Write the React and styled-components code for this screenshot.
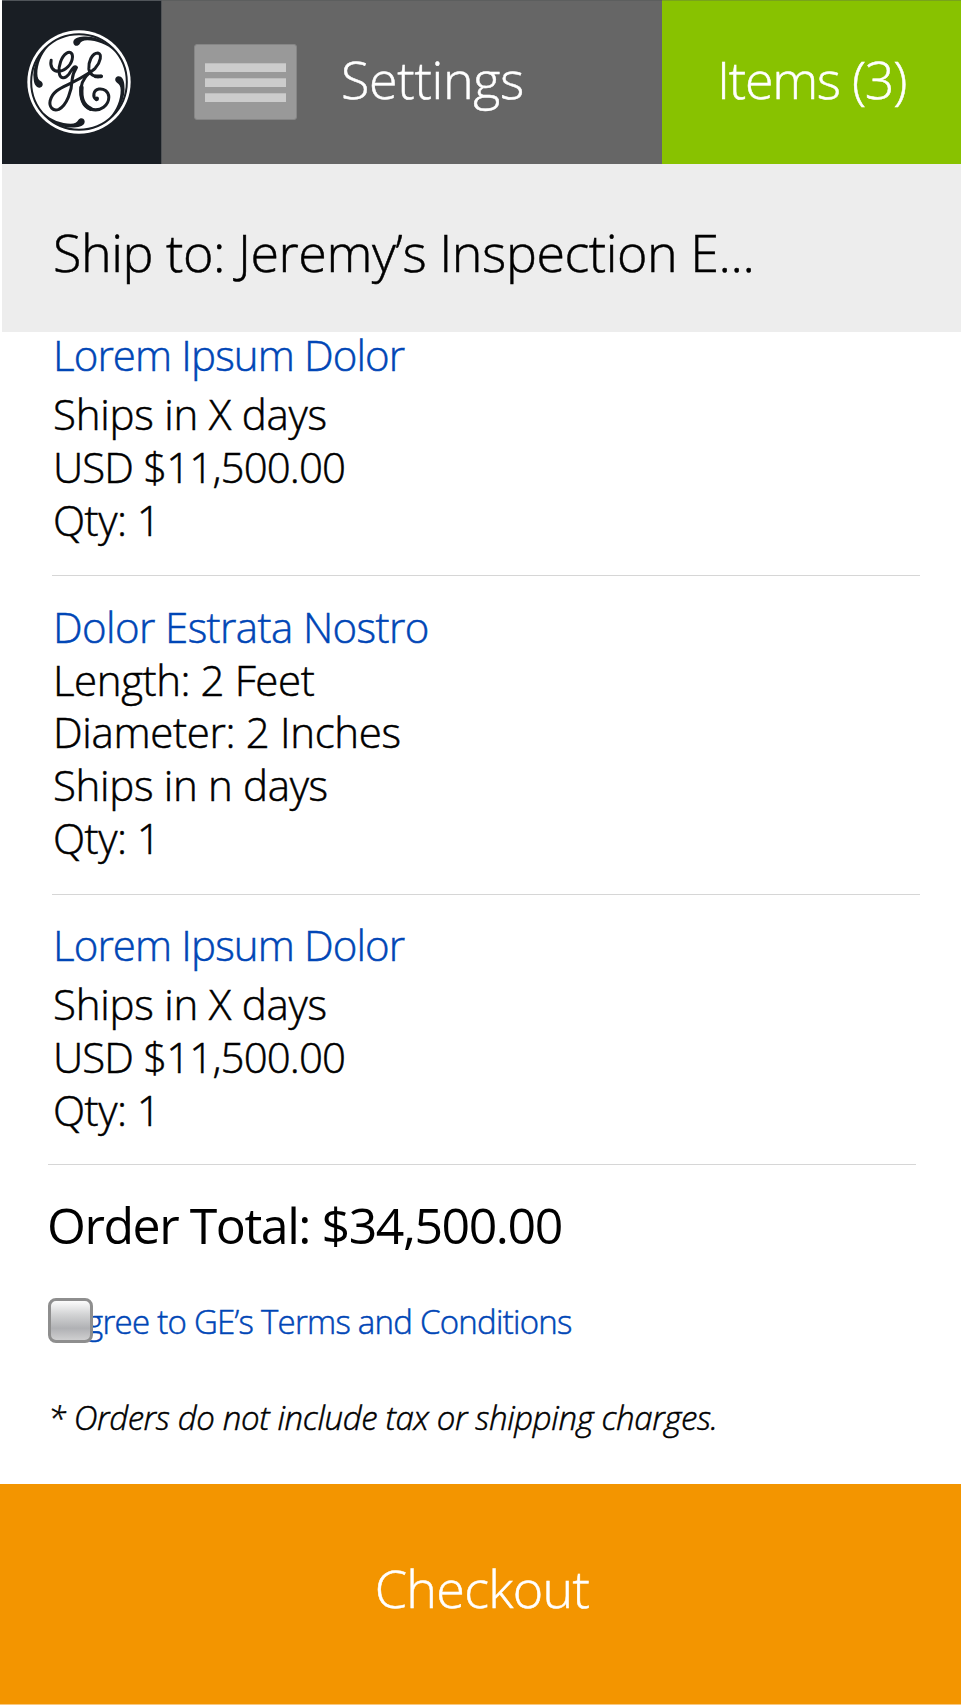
import React from 'react';
import styled, { createGlobalStyle } from 'styled-components';

const GlobalStyle = createGlobalStyle`
  *, *::before, *::after { box-sizing: border-box; }
  body { margin: 0; background: #fff; }
`;

const Page = styled.div`
  display: flex;
  flex-direction: column;
  height: 1705px;
  overflow: hidden;
  background: #fff;
  color: #000;
  font-family: "Open Sans", "Noto Sans", sans-serif;
  font-weight: 300;
  -webkit-text-stroke: 0.5px currentColor;
`;

const Header = styled.header`
  display: flex;
  flex: none;
  height: 164px;
  margin-left: 2px;
`;

const LogoCell = styled.div`
  display: flex;
  align-items: center;
  justify-content: center;
  width: 159px;
  padding: 0 6px 1px 0;
  border-top: 1px solid #50555a;
  background: #191e24;
`;

const Logo = styled.svg`
  width: 104px;
  height: 104px;
`;

const SettingsCell = styled.div`
  display: flex;
  align-items: center;
  width: 501px;
  padding: 0 0 1px 32px;
  border-top: 1px solid #5c5e5e;
  border-left: 1px solid #505356;
  background: #666;
`;

const MenuButton = styled.button`
  display: flex;
  flex-direction: column;
  align-items: center;
  justify-content: center;
  gap: 6px;
  width: 103px;
  height: 76px;
  padding: 0;
  border: 1px solid #868686;
  border-radius: 3px;
  background: #999;
`;

const MenuBar = styled.span`
  width: 81px;
  height: 9px;
  background: #ccc;
  border-top: 1px solid #bdbdbd;
`;

const HeaderLabel = styled.span`
  padding-bottom: 7px;
  color: #fff;
  font-size: 52px;
  line-height: 71px;
  white-space: nowrap;
  letter-spacing: ${(p) => p.$spacing}px;
  margin-left: ${(p) => p.$left}px;
`;

const ItemsCell = styled.div`
  display: flex;
  align-items: center;
  flex: 1;
  padding-bottom: 1px;
  border-top: 1px solid #78a31c;
  background: #88c200;
`;

const ShipTo = styled.div`
  flex: none;
  height: 168px;
  margin-left: 2px;
  padding: 52px 0 0 51px;
  background: #ededed;
  font-size: 52px;
  line-height: 71px;
  letter-spacing: -0.45px;
  white-space: nowrap;
`;

const Item = styled.section`
  flex: none;
  margin: 0 ${(p) => p.$right}px 0 ${(p) => p.$left}px;
  padding: ${(p) => p.$top}px 0 ${(p) => p.$bottom}px ${(p) => 53 - p.$left}px;
  border-bottom: 1px solid #d6d6d6;
`;

const ItemTitle = styled.a`
  display: block;
  margin-bottom: ${(p) => p.$gap}px;
  color: #0046b6;
  font-size: 42px;
  line-height: 45px;
  letter-spacing: ${(p) => p.$spacing}px;
`;

const ItemLine = styled.div`
  font-size: 42px;
  line-height: 53px;
  letter-spacing: ${(p) => p.$spacing}px;
  margin-top: ${(p) => p.$lead || 0}px;
`;

const Total = styled.div`
  flex: none;
  margin: 30px 0 0 47px;
  font-size: 50px;
  font-weight: 400;
  line-height: 60px;
  letter-spacing: -1.45px;
  -webkit-text-stroke: 0;
`;

const Terms = styled.label`
  position: relative;
  display: flex;
  align-items: center;
  flex: none;
  height: 45px;
  margin-top: 43px;
  padding: 2px 0 0 54px;
  color: #0046b6;
  font-size: 33px;
  letter-spacing: -0.75px;
`;

const Checkbox = styled.span`
  position: absolute;
  left: 48px;
  top: 0;
  width: 45px;
  height: 45px;
  border: 3px solid #8e8e8e;
  border-radius: 8px;
  background: linear-gradient(#fcfcfc 0%, #d2d3d4 35%, #b0b1b4 70%, #cfcfd0 100%);
`;

const Note = styled.p`
  flex: none;
  margin: 52px 0 0 48px;
  font-size: 33px;
  font-style: italic;
  line-height: 45px;
  letter-spacing: -0.36px;
  word-spacing: 0;
  white-space: nowrap;
`;

const Checkout = styled.button`
  flex: none;
  height: 221px;
  margin: 44px 0 0;
  padding: 0 0 14px 3px;
  border: 0;
  border-bottom: 1px solid #f9c880;
  background: #f39500;
  color: #fff;
  font: inherit;
  font-size: 52px;
  letter-spacing: -0.66px;
`;

const product = {
  title: 'Lorem Ipsum Dolor',
  spacing: -0.88,
  gap: 10,
  lines: [
    { text: 'Ships in X days', spacing: -0.24 },
    { text: 'USD $11,500.00', spacing: -0.88 },
    { text: 'Qty: 1', spacing: -0.5 },
  ],
};

const items = [
  { ...product, top: 0, bottom: 29, left: 52, right: 41 },
  {
    title: 'Dolor Estrata Nostro',
    spacing: -0.6,
    gap: 4,
    top: 28,
    bottom: 30,
    left: 52,
    right: 41,
    lines: [
      { text: 'Length: 2 Feet', spacing: -0.42 },
      { text: 'Diameter: 2 Inches', spacing: -0.32, lead: -1 },
      { text: 'Ships in n days', spacing: -0.32 },
      { text: 'Qty: 1', spacing: -0.5 },
    ],
  },
  { ...product, top: 27, bottom: 28, left: 48, right: 45 },
];

const SWIRL =
  'M-17 -118 C-18 -127 -8 -135 8 -136 C45 -141 85 -123 106 -92 C85 -113 52 -125 25 -125 C12 -125 6 -121 2 -114 C-3 -106 -16 -107 -17 -118 Z';

function Monogram() {
  return (
    <Logo viewBox="-156 -156 312 312">
      <circle r="155" fill="#fff" />
      <circle r="143.5" fill="none" stroke="#191e24" strokeWidth="6" />
      {[0, 90, 180, 270].map((a) => (
        <path key={a} d={SWIRL} fill="#191e24" transform={`rotate(${a})`} />
      ))}
      <g
        transform="translate(-236.5 -246)"
        fill="none"
        stroke="#191e24"
        strokeWidth="9"
        strokeLinecap="round"
        strokeLinejoin="round"
      >
        <path d="M153 181 C149 199 157 214 176 214 C197 212 216 192 217 171 C217 157 208 154 199 160 C184 170 174 198 177 218 C180 237 195 237 205 224 C214 211 221 196 229 202 C224 210 217 222 216 239 C215 272 200 316 176 328 C158 335 146 320 150 302 C157 273 184 263 211 250 C235 239 256 226 270 217" />
        <path d="M303 229 C282 233 269 224 266 207 C264 187 275 159 293 159 C307 161 301 187 285 205 C267 221 247 232 243 262 C240 293 249 319 271 327 C302 337 326 315 326 291 C325 273 310 265 296 267 C279 270 276 291 289 299" />
        <path d="M244 262 C241 293 250 318 271 326" strokeWidth="13" />
        <path d="M286 229 L303 229" strokeWidth="11" />
        <circle cx="290" cy="296" r="4" fill="#191e24" strokeWidth="5" />
      </g>
    </Logo>
  );
}

export default function App() {
  return (
    <Page>
      <GlobalStyle />
      <Header>
        <LogoCell>
          <Monogram />
        </LogoCell>
        <SettingsCell>
          <MenuButton aria-label="Menu">
            <MenuBar />
            <MenuBar />
            <MenuBar />
          </MenuButton>
          <HeaderLabel $left={44} $spacing={-0.3}>Settings</HeaderLabel>
        </SettingsCell>
        <ItemsCell>
          <HeaderLabel $left={55} $spacing={-1.3}>Items (3)</HeaderLabel>
        </ItemsCell>
      </Header>
      <ShipTo>Ship to: Jeremy’s Inspection E...</ShipTo>
      {items.map((item, i) => (
        <Item key={i} $top={item.top} $bottom={item.bottom} $left={item.left} $right={item.right}>
          <ItemTitle $gap={item.gap} $spacing={item.spacing}>{item.title}</ItemTitle>
          {item.lines.map((line) => (
            <ItemLine key={line.text} $spacing={line.spacing} $lead={line.lead}>
              {line.text}
            </ItemLine>
          ))}
        </Item>
      ))}
      <Total>Order Total: $34,500.00</Total>
      <Terms>
        I agree to GE’s Terms and Conditions
        <Checkbox />
      </Terms>
      <Note>* Orders do not include tax or shipping charges.</Note>
      <Checkout>Checkout</Checkout>
    </Page>
  );
}
